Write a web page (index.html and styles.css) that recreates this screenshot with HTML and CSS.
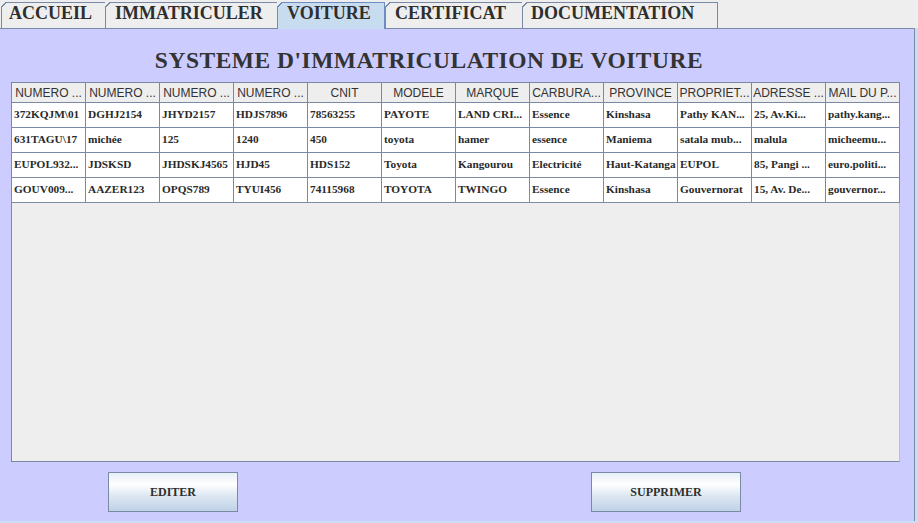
FILE: index.html
```html
<!DOCTYPE html>
<html lang="fr">
<head>
<meta charset="utf-8">
<title>Système d'immatriculation</title>
<link rel="stylesheet" href="styles.css">
</head>
<body>
<div class="tabs">
  <div class="tab">ACCUEIL</div>
  <div class="tab">IMMATRICULER</div>
  <div class="tab selected">VOITURE</div>
  <div class="tab">CERTIFICAT</div>
  <div class="tab last">DOCUMENTATION</div>
</div>
<div class="frame">
  <div class="panel">
    <h1 class="title">SYSTEME D'IMMATRICULATION DE VOITURE</h1>
    <div class="scroll">
      <table class="grid">
        <thead>
          <tr>
            <th>NUMERO ...</th><th>NUMERO ...</th><th>NUMERO ...</th><th>NUMERO ...</th>
            <th>CNIT</th><th>MODELE</th><th>MARQUE</th><th>CARBURA...</th>
            <th>PROVINCE</th><th>PROPRIET...</th><th>ADRESSE ...</th><th>MAIL DU P...</th>
          </tr>
        </thead>
        <tbody>
          <tr>
            <td>372KQJM\01</td><td>DGHJ2154</td><td>JHYD2157</td><td>HDJS7896</td>
            <td>78563255</td><td>PAYOTE</td><td>LAND CRI...</td><td>Essence</td>
            <td>Kinshasa</td><td>Pathy KAN...</td><td>25, Av.Ki...</td><td>pathy.kang...</td>
          </tr>
          <tr>
            <td>631TAGU\17</td><td>michée</td><td>125</td><td>1240</td>
            <td>450</td><td>toyota</td><td>hamer</td><td>essence</td>
            <td>Maniema</td><td>satala mub...</td><td>malula</td><td>micheemu...</td>
          </tr>
          <tr>
            <td>EUPOL932...</td><td>JDSKSD</td><td>JHDSKJ4565</td><td>HJD45</td>
            <td>HDS152</td><td>Toyota</td><td>Kangourou</td><td>Electricité</td>
            <td>Haut-Katanga</td><td>EUPOL</td><td>85, Pangi ...</td><td>euro.politi...</td>
          </tr>
          <tr>
            <td>GOUV009...</td><td>AAZER123</td><td>OPQS789</td><td>TYUI456</td>
            <td>74115968</td><td>TOYOTA</td><td>TWINGO</td><td>Essence</td>
            <td>Kinshasa</td><td>Gouvernorat</td><td>15, Av. De...</td><td>gouvernor...</td>
          </tr>
        </tbody>
      </table>
    </div>
    <div class="actions">
      <button class="btn edit">EDITER</button>
      <button class="btn del">SUPPRIMER</button>
    </div>
  </div>
</div>
</body>
</html>
```
FILE: styles.css
```css
* { box-sizing: border-box; }
html, body {
  margin: 0;
  padding: 0;
  width: 918px;
  height: 523px;
  overflow: hidden;
  background: #eeeeee;
  font-family: "Liberation Serif", "DejaVu Serif", serif;
  color: #2e2e2e;
}

.tabs {
  display: flex;
  align-items: flex-end;
  height: 28px;
  padding-left: 1px;
}
.tab {
  height: 26px;
  padding: 0 9px;
  font-weight: bold;
  font-size: 18px;
  line-height: 23px;
  color: #2e2e2e;
  white-space: nowrap;
  background:
    linear-gradient(135deg, #eeeeee 0 3.4px, #7a8aa6 3.4px 4.5px, transparent 4.5px) top left / 8px 8px no-repeat,
    linear-gradient(#7a8aa6, #7a8aa6) top left / 100% 1px no-repeat,
    linear-gradient(#7a8aa6, #7a8aa6) top left / 1px 100% no-repeat,
    #eeeeee;
}
.tab:nth-child(1) { width: 104px; padding-left: 8px; }
.tab:nth-child(2) { width: 172px; padding-left: 10px; }
.tab:nth-child(3) { width: 108px; padding-left: 10px; }
.tab:nth-child(4) { width: 137px; padding-left: 10px; }
.tab:nth-child(5) { width: 196px; padding-left: 9px; border-right: 1px solid #7a8aa6; }
.tab.selected {
  height: 27px;
  margin-bottom: -1px;
  position: relative;
  z-index: 1;
  background:
    linear-gradient(135deg, #eeeeee 0 3.4px, #6d8cc4 3.4px 4.5px, transparent 4.5px) top left / 8px 8px no-repeat,
    linear-gradient(#6d8cc4, #6d8cc4) top left / 100% 1px no-repeat,
    linear-gradient(#6d8cc4, #6d8cc4) top left / 1px 100% no-repeat,
    linear-gradient(#6d8cc4, #6d8cc4) top right / 1px 100% no-repeat,
    #c8dcf0;
}

.frame {
  width: 918px;
  height: 495px;
  background: #c8def4;
  padding: 0 3px 2px 0;
}
.panel {
  height: 100%;
  background: #ccccff;
  border-top: 1px solid #7a8aa6;
  border-right: 1px solid #7a8aa6;
  display: flex;
  flex-direction: column;
}

.title {
  margin: 0;
  height: 53px;
  padding: 17px 56px 0 0;
  text-align: center;
  font-size: 23.5px;
  line-height: 28px;
  font-weight: bold;
  color: #333333;
  letter-spacing: 0.5px;
}

.scroll {
  margin-left: 11px;
  width: 889px;
  height: 380px;
  background: #eeeeee;
  border-left: 1px solid #7a8aa6;
  border-bottom: 1px solid #7a8aa6;
  border-right: 1px solid #b8c0d0;
}
.grid {
  border-collapse: collapse;
  table-layout: fixed;
  width: 889px;
  margin-left: -1px;
}
.grid th, .grid td {
  width: 74px;
  border: 1px solid #7a8aa6;
  overflow: hidden;
  white-space: nowrap;
}
.grid th {
  height: 20px;
  background: #eeeeee;
  font-family: "Liberation Sans", Arial, sans-serif;
  font-weight: normal;
  font-size: 12px;
  color: #333333;
  text-align: center;
  padding: 0 1px;
}
.grid td {
  height: 25px;
  background: #ffffff;
  font-weight: bold;
  font-size: 11.3px;
  color: #2a2a2a;
  padding: 0 1px 3px 2px;
  text-align: left;
}

.actions {
  display: flex;
  padding: 10px 0 0 108px;
  gap: 353px;
}
.btn {
  height: 40px;
  border: 1px solid #7a8aa6;
  font-family: "Liberation Serif", "DejaVu Serif", serif;
  font-weight: bold;
  font-size: 12px;
  color: #2e2e2e;
  padding: 0;
  background: linear-gradient(to bottom, #e6eef8 0%, #ffffff 30%, #dde7f2 60%, #bfd2e6 100%);
}
.btn.edit { width: 130px; }
.btn.del { width: 150px; }
```
